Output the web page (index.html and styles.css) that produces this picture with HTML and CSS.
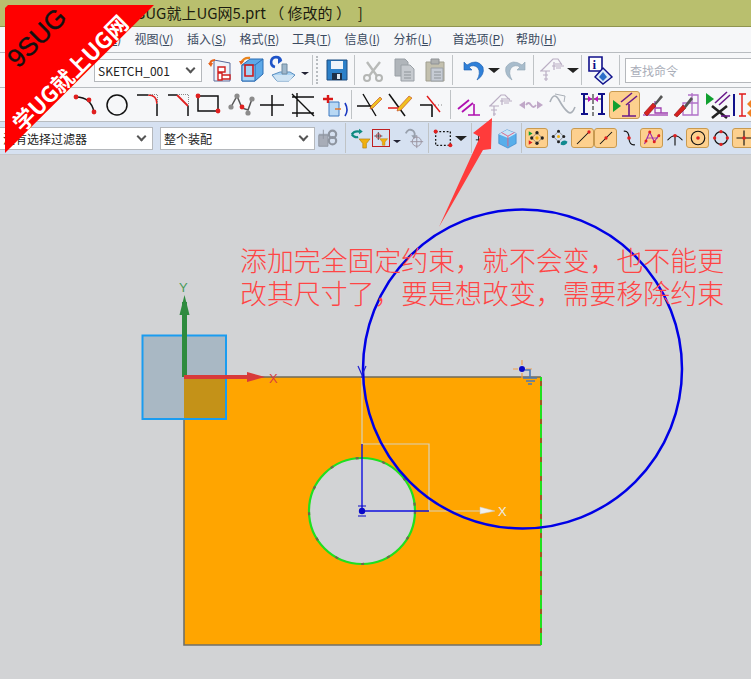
FILE: index.html
```html
<!DOCTYPE html>
<html lang="zh">
<head>
    <meta charset="UTF-8">
    <title>9SUG就上UG网5.prt</title>
    <link rel="stylesheet" href="styles.css">
</head>
<body>
    <div class="app">
        <div class="titlebar">9SUG就上UG网5.prt （ 修改的 ）  ]</div>

        <div class="menubar">
            <span>编辑(<u>E</u>)</span>
            <span>视图(<u>V</u>)</span>
            <span>插入(<u>S</u>)</span>
            <span>格式(<u>R</u>)</span>
            <span>工具(<u>T</u>)</span>
            <span>信息(<u>I</u>)</span>
            <span class="tight">分析(<u>L</u>)</span>
            <span class="wide">首选项(<u>P</u>)</span>
            <span>帮助(<u>H</u>)</span>
        </div>

        <div class="toolbar row-std">
            <div class="combo name-combo"><span>SKETCH_001</span><i class="chev"></i></div>
            <div class="tool"><svg viewBox="0 0 28 28"><path d="M7 4L23 7V25H7z" fill="#eef2fa" stroke="#5a6a9a"/><path d="M11 11h7v5h-7zM11 17h4v7h-4zM15 19h8v4h-8z" fill="#fff" stroke="#d02020" stroke-width="1.4"/><path d="M3 9Q3 4 8 4" fill="none" stroke="#e8641c" stroke-width="2.2"/><path d="M1 7h5l-2 4z" fill="#e8641c"/></svg></div>
            <div class="tool"><svg viewBox="0 0 28 28"><path d="M4 9L12 3H25V18L17 25H4z" fill="#5da9e8" stroke="#2a6cb4"/><path d="M4 9H17V25H4z" fill="#a6d2f6" stroke="#2a6cb4"/><path d="M17 9L25 3" stroke="#2a6cb4"/><path d="M7 9h8v11H7z" fill="none" stroke="#d01818" stroke-width="1.6"/><path d="M3 7Q6 1 12 2" fill="none" stroke="#e8841c" stroke-width="2.4"/><path d="M1 5h5l-3 4z" fill="#e8641c"/></svg></div>
            <div class="tool"><svg viewBox="0 0 28 28"><path d="M3 19L11 16H21L26 19 20 25H8z" fill="#a9d2f2" stroke="#5b8fc0"/><path d="M13 8h5v10h-5z" fill="#9fb8cc" stroke="#6f8aa0"/><path d="M4 19h21l-4 6H8z" fill="#d8e8f4" opacity=".8"/><path d="M12 5A5 5 0 1 0 6 11" fill="none" stroke="#1f54c8" stroke-width="2.6"/><path d="M9 1l4 4-4 3z" fill="#1f54c8"/></svg></div>
            <i class="drop small"></i>
            <i class="sep"></i><i class="grip"></i>
            <div class="tool"><svg viewBox="0 0 28 28"><path d="M4 4H24V24H4z" fill="#2c80c8" stroke="#1d4c80"/><path d="M8 5H20V13H8z" fill="#eef4fa"/><path d="M9 17H19V24H9z" fill="#1d3048"/><path d="M14 18h3v5h-3z" fill="#dfe8f0"/></svg></div>
            <i class="sep"></i>
            <div class="tool dim"><svg viewBox="0 0 28 28"><path d="M10 20L21 6M18 20L8 6" stroke="#b8bab8" stroke-width="2.4"/><circle cx="8" cy="22" r="3" fill="none" stroke="#b4b6b4" stroke-width="2"/><circle cx="20" cy="22" r="3" fill="none" stroke="#b4b6b4" stroke-width="2"/></svg></div>
            <div class="tool dim"><svg viewBox="0 0 28 28"><path d="M5 3H15L18 6V20H5z" fill="#b0b5ba" stroke="#9aa0a6"/><path d="M11 9H20L24 13V25H11z" fill="#c6cacf" stroke="#9aa0a6"/><path d="M14 16h7M14 19h7M14 22h7" stroke="#8e9499"/></svg></div>
            <div class="tool dim"><svg viewBox="0 0 28 28"><path d="M5 6H23V25H5z" fill="#c3c0ae" stroke="#a09e90"/><path d="M10 3H18V8H10z" fill="#aeb0b0" stroke="#8f9296"/><path d="M10 12H22V25H10z" fill="#c6cbd4" stroke="#9aa0a6"/><path d="M13 16h7M13 19h7M13 22h7" stroke="#8e9499"/></svg></div>
            <i class="sep roomy"></i>
            <div class="tool"><svg viewBox="0 0 28 28"><path d="M5 6V14H13L10 11Q15 8 19 12 22 17 18 24 26 19 24 11 18 2 8 9z" fill="#2f80d8" stroke="#1a5cb0" stroke-width=".6"/></svg></div>
            <i class="drop"></i>
            <div class="tool dim"><svg viewBox="0 0 28 28"><path d="M23 6V14H15L18 11Q13 8 9 12 6 17 10 24 2 19 4 11 10 2 20 9z" fill="#a8bccc" stroke="#90a4b4" stroke-width=".6"/></svg></div>
            <i class="sep"></i>
            <div class="tool dim"><svg viewBox="0 0 28 28"><path class="stair" d="M3 15L15 3H20L24 9M2 15H12M5 19H10M6 23H10M8 15V25M16 6V14M14 10H26M17 8H24M18 12H23"/></svg></div>
            <i class="drop"></i>
            <i class="sep"></i>
            <div class="tool info"><svg viewBox="0 0 28 28"><path d="M3 1H16V15H3z" fill="#fff" stroke="#10108a" stroke-width="1.6"/><text x="6.5" y="13" class="info-i">i</text><path d="M17 12L26 21 17 28 9 21z" fill="#dceaf8" stroke="#10108a" stroke-width="1.4"/><path d="M17 16L21 21 17 25 13 21z" fill="#2a6ec8"/></svg></div>
            <i class="sep"></i>
            <div class="search">查找命令</div>
        </div>

        <div class="toolbar row-sketch">
            <div class="tool"><svg viewBox="0 0 28 28"><circle cx="6" cy="6" r="2.4" fill="#e02020"/></svg></div>
            <div class="tool"><svg viewBox="0 0 28 28"><path d="M4 6Q19 6 22 21" fill="none" stroke="#111" stroke-width="1.5"/><circle cx="4" cy="6" r="2.4" fill="#e02020"/><circle cx="17" cy="9" r="2.4" fill="#e02020"/><circle cx="22" cy="21" r="2.4" fill="#e02020"/></svg></div>
            <div class="tool"><svg viewBox="0 0 28 28"><circle cx="14" cy="14" r="10" fill="none" stroke="#111" stroke-width="1.5"/></svg></div>
            <div class="tool"><svg viewBox="0 0 28 28"><path d="M3 4H14M23 13V25" fill="none" stroke="#111" stroke-width="1.5"/><path d="M14 4Q23 4 23 13" fill="none" stroke="#e02020" stroke-width="1.6"/><path d="M14 3.5H23.5V13" fill="none" stroke="#888" stroke-dasharray="1 1"/></svg></div>
            <div class="tool"><svg viewBox="0 0 28 28"><path d="M3 4H12M23 15V25" fill="none" stroke="#111" stroke-width="1.5"/><path d="M12 4L23 15" fill="none" stroke="#e02020" stroke-width="1.8"/><path d="M12 3.5H23.5V15" fill="none" stroke="#888" stroke-dasharray="1 1"/></svg></div>
            <div class="tool"><svg viewBox="0 0 28 28"><path d="M2 5H22V20H2z" fill="none" stroke="#111" stroke-width="1.5"/><circle cx="2" cy="5" r="2.4" fill="#e02020"/><circle cx="22" cy="20" r="2.4" fill="#e02020"/></svg></div>
            <div class="tool"><svg viewBox="0 0 28 28"><path d="M4 16L10 5 15 17 21 19 25 8" fill="none" stroke="#555" stroke-width="1.5"/><g fill="#8c8c8c"><circle cx="4" cy="16" r="2.6"/><circle cx="10" cy="5" r="2.6"/><circle cx="21" cy="22" r="2.6"/><circle cx="25" cy="8" r="2.6"/></g><circle cx="15" cy="16" r="2.4" fill="#e02020"/></svg></div>
            <div class="tool"><svg viewBox="0 0 28 28"><path d="M14 4V25M2 14H26" stroke="#111" stroke-width="1.5"/></svg></div>
            <div class="tool"><svg viewBox="0 0 28 28"><path d="M3 6H25M3 22H25M8 2V26M3 3L25 25" stroke="#111" stroke-width="1.4"/></svg></div>
            <div class="tool"><svg viewBox="0 0 28 28"><path d="M9 11H19V25H9z" fill="#b8d8f4" stroke="#3c78c0"/><path d="M8 4V12M3 8H13" stroke="#d81818" stroke-width="2.4"/><path d="M15 18h6" stroke="#e8701c" stroke-width="1.4"/><path d="M25 12Q29 19 25 25" fill="none" stroke="#1a38c0" stroke-width="1.6"/></svg></div>
            <i class="sep tall"></i>
            <div class="tool mid"><svg viewBox="0 0 28 28"><path d="M2 15H18M8 3L21 25" stroke="#111" stroke-width="1.4"/><path d="M16 15l9-9 2 2-9 9-3 1z" fill="#f0c020" stroke="#c04020" stroke-width=".6"/></svg></div>
            <div class="tool mid"><svg viewBox="0 0 28 28"><path d="M3 3L19 25" stroke="#111" stroke-width="1.5"/><path d="M2 17H13" stroke="#e01818" stroke-width="1.5"/><path d="M12 17L23 5l3 2-11 12-4 1z" fill="#f0c020" stroke="#c04020" stroke-width=".6"/></svg></div>
            <div class="tool mid"><svg viewBox="0 0 28 28"><path d="M2 14H14M14 14V26" stroke="#111" stroke-width="1.6"/><path d="M14 14H25" stroke="#888" stroke-dasharray="1 2"/><path d="M9 5L22 21" stroke="#e01818" stroke-width="1.4"/></svg></div>
            <i class="sep tall"></i>
            <div class="tool"><svg viewBox="0 0 28 28"><path d="M3 18L14 9M7 21L18 12" stroke="#b010b0" stroke-width="1.8"/><path d="M19 13V24M13 24H25" stroke="#b010b0" stroke-width="1.6"/></svg></div>
            <div class="tool"><svg viewBox="0 0 28 28"><path class="stair" d="M4 15L15 4H19L24 9M3 15H13M5 19H11M7 23H10M8 15V25M16 7V14M14 10H26M17 8H24M18 12H23"/></svg></div>
            <div class="tool"><svg viewBox="0 0 28 28"><path d="M2 14l6-4v8zM26 14l-6-4v8z" fill="#c0a8c8"/><path d="M9 14q2.5-4 5 0t5 0" fill="none" stroke="#c0a8c8" stroke-width="1.8"/></svg></div>
            <div class="tool"><svg viewBox="0 0 28 28"><path d="M2 11Q6 0 11 9T20 21 27 16" fill="none" stroke="#aab0b8" stroke-width="1.6"/><path d="M7 3L17 5 16 11" fill="none" stroke="#aab0b8"/></svg></div>
            <div class="tool"><svg viewBox="0 0 28 28"><path d="M2 3H9M5 3V23M2 23H9M19 3H26M23 3V23M19 23H26" stroke="#10108a" stroke-width="2" fill="none"/><path d="M14 3V26" stroke="#111" stroke-dasharray="4 2"/><path d="M6 8H22" stroke="#111"/><path d="M9 5l4 3-4 3zM19 5l-4 3 4 3z" fill="#c010c0"/></svg></div>
            <div class="tool on"><svg viewBox="0 0 28 28"><path d="M3 9l8 6-8 6z" fill="#10a030"/><path d="M11 11L22 2M16 14L27 5" stroke="#6a1a8a" stroke-width="1.6"/><path d="M19 13V25M12 25H26" stroke="#6a1a8a" stroke-width="1.6"/></svg></div>
            <div class="tool"><svg viewBox="0 0 28 28"><path d="M14 10V22H27M14 17H20V22" fill="none" stroke="#a040b0" stroke-width="1.3"/><path d="M2 24H27" stroke="#a040b0" stroke-width="1.3"/><path d="M3 22L12 12l3 3-9 10z" fill="#d82020" stroke="#801010" stroke-width=".6"/><path d="M13 13L20 4l2 2-7 8z" fill="#555"/></svg></div>
            <div class="tool"><svg viewBox="0 0 28 28"><path d="M11 12H26V24H11zM16 4H26V12M20 2V24" fill="none" stroke="#b070c8" stroke-width="1.3"/><path d="M2 24L11 14l3 3-9 9z" fill="#d82020" stroke="#801010" stroke-width=".6"/><path d="M12 15L19 6l2 2-7 9z" fill="#555"/></svg></div>
            <div class="tool"><svg viewBox="0 0 28 28"><path d="M3 2l8 6-8 6z" fill="#10a030"/><path d="M12 12L24 1M16 14L27 4" stroke="#6a1a8a" stroke-width="1.6"/><path d="M9 15L24 27M24 15L9 27" stroke="#222" stroke-width="2.6"/><path d="M18 25H27" stroke="#6a1a8a" stroke-width="1.6"/></svg></div>
            <div class="tool cut"><svg viewBox="0 0 28 28"><path d="M3 3V25" stroke="#10108a" stroke-width="2"/><path d="M8 3H15M11 3V25M8 25H15" stroke="#e01818" stroke-width="1.4"/><path d="M21 8l-5 5 5 5zM21 17l-5 5 5 5z" fill="#f08020"/></svg></div>
        </div>

        <div class="toolbar row-select">
            <div class="combo filter-combo"><span>没有选择过滤器</span><i class="chev"></i></div>
            <div class="combo scope-combo"><span>整个装配</span><i class="chev"></i></div>
            <div class="tool small-tool dim"><svg viewBox="0 0 24 24"><path d="M3 9H13V21H3z" fill="#a8adb8" stroke="#8e95a0"/><path d="M8 3V13M3 8H13" stroke="#8e95a0"/><ellipse cx="18" cy="8" rx="4" ry="4" fill="none" stroke="#8e95a0" stroke-width="2.4"/><ellipse cx="18" cy="15" rx="4" ry="4" fill="none" stroke="#8e95a0" stroke-width="2.4"/></svg></div>
            <i class="sep pushed"></i>
            <div class="tool small-tool"><svg viewBox="0 0 24 24"><path d="M3 8Q6 4 11 5M3 8q3 4 7 3" fill="none" stroke="#0f8a80" stroke-width="2.4"/><path d="M11 2l4 3-4 3z" fill="#0f8a80"/><path d="M11 13H23L19 18V23H15V18z" fill="#f0b010" stroke="#a87808" stroke-width=".6"/></svg></div>
            <div class="tool small-tool framed"><svg viewBox="0 0 24 24"><path d="M8 3V15M2 9H14" stroke="#111"/><circle cx="8" cy="9" r="3.4" fill="none" stroke="#c02020"/><path d="M10 13H22L18 18V23H14V18z" fill="#f0b010" stroke="#a87808" stroke-width=".6"/></svg></div>
            <i class="drop small"></i>
            <div class="tool small-tool dim"><svg viewBox="0 0 24 24"><path d="M3 7Q6 1 11 4 14 7 12 11" fill="none" stroke="#98a0ac" stroke-width="2"/><path d="M9 9h6l-3 4z" fill="#98a0ac"/><circle cx="15" cy="16" r="5" fill="none" stroke="#98909c"/><path d="M15 9V23M8 16H22" stroke="#98909c"/></svg></div>
            <i class="sep"></i>
            <div class="tool small-tool"><svg viewBox="0 0 24 24"><path d="M4 5H20V20H4z" fill="none" stroke="#111" stroke-width="1.4" stroke-dasharray="2 2"/><circle cx="4" cy="5" r="2.2" fill="#e02020"/><circle cx="20" cy="20" r="2.2" fill="#e02020"/></svg></div>
            <i class="drop spaced"></i>
            <i class="sep"></i>
            <div class="tool small-tool hidden-part"><svg viewBox="0 0 24 24"><path d="M5 21V5M2 14H16" stroke="#111"/></svg></div>
            <div class="tool small-tool"><svg viewBox="0 0 24 24"><path d="M3 8L12 3 22 7V18L13 23 3 18z" fill="#58aeea" stroke="#2a78c0" stroke-width=".6"/><path d="M3 8L13 12 22 7 12 3z" fill="#c8e4f8"/><path d="M6 6L13 10V21M13 10L20 6" fill="none" stroke="#e06080"/></svg></div>
            <i class="sep"></i>
            <div class="tool snap on first"><svg viewBox="0 0 24 24"><path d="M12 5l7 7-7 7-7-7z" fill="none" stroke="#777"/><g fill="#222"><circle cx="12" cy="5" r="2.2"/><circle cx="19" cy="12" r="2.2"/><circle cx="12" cy="19" r="2.2"/><circle cx="5" cy="12" r="2.2"/></g><circle cx="12" cy="12" r="2.2" fill="#f0b010"/><path d="M1 3l5 3-5 3z" fill="#10a030"/><path d="M1 15l5 3-5 3z" fill="#e02020"/></svg></div>
            <div class="tool snap"><svg viewBox="0 0 24 24"><path d="M10 3l7 7-7 7-7-7z" fill="none" stroke="#777"/><g fill="#222"><circle cx="10" cy="3" r="2"/><circle cx="17" cy="10" r="2"/><circle cx="10" cy="17" r="2"/><circle cx="3" cy="10" r="2"/></g><circle cx="10" cy="10" r="2" fill="#f0b010"/><path d="M13 18q4-5 9-1-2 6-9 4z" fill="#108a90"/></svg></div>
            <div class="tool snap on"><svg viewBox="0 0 24 24"><path d="M4 20L20 4" stroke="#111" stroke-width="1.4"/><circle cx="20" cy="4" r="2.2" fill="#e02020"/></svg></div>
            <div class="tool snap on"><svg viewBox="0 0 24 24"><path d="M4 20L20 4" stroke="#111" stroke-width="1.4"/><circle cx="12" cy="12" r="2.2" fill="#e02020"/></svg></div>
            <div class="tool snap"><svg viewBox="0 0 24 24"><path d="M5 3Q12 2 12 12T20 21" fill="none" stroke="#111" stroke-width="1.5"/><circle cx="12" cy="12" r="2.4" fill="#e02020"/></svg></div>
            <div class="tool snap on"><svg viewBox="0 0 24 24"><path d="M2 20L9 4 15 17 22 7" fill="none" stroke="#9a20b0" stroke-width="1.4"/><path d="M5 12L20 12" stroke="#9a20b0"/><g fill="#e02020"><circle cx="9" cy="4" r="2"/><circle cx="4" cy="16" r="2"/><circle cx="15" cy="17" r="2"/><circle cx="21" cy="9" r="2"/></g></svg></div>
            <div class="tool snap"><svg viewBox="0 0 24 24"><path d="M2 15Q12 3 22 15M12 9V22" fill="none" stroke="#111" stroke-width="1.5"/><circle cx="12" cy="9" r="2.4" fill="#e02020"/></svg></div>
            <div class="tool snap on"><svg viewBox="0 0 24 24"><circle cx="12" cy="12" r="9" fill="none" stroke="#111" stroke-width="1.5"/><circle cx="12" cy="12" r="2.4" fill="#e02020"/></svg></div>
            <div class="tool snap"><svg viewBox="0 0 24 24"><circle cx="12" cy="12" r="8.5" fill="none" stroke="#111" stroke-width="1.5"/><g fill="#e02020"><circle cx="12" cy="3.5" r="2.2"/><circle cx="20.500" cy="12" r="2.2"/><circle cx="12" cy="20.500" r="2.2"/><circle cx="3.500" cy="12" r="2.2"/></g></svg></div>
            <div class="tool snap on"><svg viewBox="0 0 24 24"><path d="M12 2V22M2 12H22" stroke="#111" stroke-width="1.5"/><circle cx="12" cy="12" r="2.4" fill="#e02020"/></svg></div>
        </div>

        <div class="viewport">
            <svg class="model" viewBox="0 155 751 524">
                <rect x="184" y="377" width="357" height="268" fill="#ffa500"/>
                <path d="M184 377V645H541" fill="none" stroke="#70706a" stroke-width="1.6"/>
                <path d="M184 377H541" stroke="#6e6a5a" stroke-width="1.6"/>
                <path d="M541 377V645" stroke="#1fe01f" stroke-width="2"/>
                <path d="M541 381V645" stroke="#a05a20" stroke-width="2" stroke-dasharray="5 14"/>

                <rect x="142.500" y="335.500" width="41.500" height="83" fill="#a9b8c4"/>
                <rect x="184" y="335.500" width="41.500" height="41.500" fill="#a9b8c4"/>
                <rect x="184" y="377" width="41.500" height="41.500" fill="#c49218"/>
                <rect x="142.500" y="335.500" width="83.500" height="83.500" fill="none" stroke="#1a9cf0" stroke-width="2"/>

                <circle cx="362" cy="511" r="53" fill="#d2d3d5" stroke="#1fe01f" stroke-width="2.2"/>
                <circle cx="362" cy="511" r="53" fill="none" stroke="#6a6a50" stroke-width="2.2" stroke-dasharray="3 24"/>

                <path d="M362 378V444M362 444H429V511H480" fill="none" stroke="#d8d2bc" stroke-width="1.2"/>
                <path d="M362 444V511H429" fill="none" stroke="#1010e0" stroke-width="1.4"/>
                <path d="M480 507L495 511 480 514z" fill="#f0f0ee" stroke="#c8c8c4" stroke-width=".5"/>
                <text x="498" y="516" class="axis white">X</text>
                <circle cx="362" cy="511" r="3.2" fill="#0808c8"/>
                <path d="M358 506H366M358 516H366" stroke="#0808c8" stroke-width="1.2"/>

                <circle cx="522.500" cy="369" r="159.500" fill="none" stroke="#0000e6" stroke-width="2.5"/>
                <path d="M358 366L362 375 366 366M362 375V378" fill="none" stroke="#2020d0" stroke-width="1.2"/>

                <path d="M522 360V365M522 373V378M513 369H518M526 369H532" stroke="#f0a050" stroke-width="1.2"/>
                <circle cx="522" cy="369" r="3" fill="#0808c8"/>
                <path d="M525 370H530V378M523 378H537M526 381H535M528 384H532" fill="none" stroke="#4a78b8" stroke-width="1.6"/>

                <rect x="182" y="302" width="5" height="75" fill="#2e8b3e"/>
                <path d="M184.500 295L189.500 315H179.500z" fill="#2e8b3e"/>
                <text x="179" y="292" class="axis green">Y</text>
                <rect x="184" y="375" width="64" height="4" fill="#d83a3a"/>
                <path d="M247 372L265 377 247 382z" fill="#d83a3a"/>
                <text x="269" y="383" class="axis red">X</text>
            </svg>
            <div class="note">添加完全固定约束，就不会变，也不能更<br>改其尺寸了，要是想改变，需要移除约束</div>
        </div>
    </div>

    <svg class="pointer" viewBox="0 0 751 679">
        <path d="M492 118L473 133 480 137 439 227 483 150 491 149z" fill="#ff3b3b"/>
    </svg>

    <div class="ribbon">
        <svg viewBox="0 0 160 160"><path d="M8 5H154L5 153V8z" fill="#ff0000"/></svg>
        <span class="ribbon-top">9SUG</span>
        <span class="ribbon-main">学UG就上UG网</span>
    </div>
</body>
</html>
```

FILE: styles.css
```css
html, body {
    margin: 0;
    padding: 0;
    height: 100%;
    overflow: hidden;
}

body {
    font-family: "Noto Sans CJK SC", "Noto Sans", sans-serif;
    font-size: 12px;
    color: #222;
}

.app {
    height: 679px;
    display: flex;
    flex-direction: column;
}

.titlebar {
    height: 26px;
    line-height: 26px;
    padding-left: 128px;
    background: #b9bf6e;
    border-bottom: 1px solid #8f9450;
    font-size: 15px;
    color: #1c1c10;
    white-space: pre;
}

.menubar {
    height: 26px;
    display: flex;
    align-items: center;
    gap: 13.5px;
    padding: 0 0 2px 82px;
    background: #f6f7f9;
    border-bottom: 1px solid #b8bcc0;
    color: #3a4a60;
    box-sizing: border-box;
    white-space: nowrap;
}

.menubar span {
    width: 39px;
}

.menubar .tight {
    margin-left: -3.5px;
}

.menubar .wide {
    width: 50px;
    margin-left: 6.5px;
}

.toolbar {
    display: flex;
    align-items: center;
    box-sizing: border-box;
    white-space: nowrap;
}

.row-std {
    height: 35px;
    padding-left: 94px;
    background: #f6f7f9;
    border-bottom: 1px solid #b8bcc0;
}

.row-sketch {
    height: 34px;
    padding-left: 39px;
    background: #f6f7f9;
    border-bottom: 1px solid #b8bcc0;
}

.row-select {
    height: 33px;
    background: #d6e1f1;
    border-bottom: 1px solid #c6c9cc;
}

.tool {
    flex: none;
    width: 31px;
    height: 28px;
    display: flex;
    align-items: center;
    justify-content: center;
    box-sizing: border-box;
}

.tool svg {
    width: 28px;
    height: 28px;
    overflow: visible;
}

.tool.mid {
    width: 31.5px;
}

.tool.info {
    margin-right: 2px;
}

.tool.on {
    background: #fdd08e;
    border: 1px solid #c89a50;
    border-radius: 3px;
}

.tool.cut {
    margin-left: -3px;
}

.small-tool {
    width: 24px;
    height: 24px;
}

.small-tool svg {
    width: 22px;
    height: 22px;
}

.small-tool.framed {
    width: 18px;
}

.small-tool.framed svg {
    width: 16px;
    height: 16px;
    border: 1px solid #c02020;
}

.small-tool.hidden-part {
    width: 21px;
}

.snap {
    width: 23px;
    height: 20px;
}

.snap svg {
    width: 18px;
    height: 18px;
}

.snap.first {
    margin-left: 1px;
}

.stair {
    fill: none;
    stroke: #baaec4;
    stroke-width: 1.2;
}

.info-i {
    font: bold 13px "Liberation Serif", serif;
    fill: #10108a;
}

.combo {
    flex: none;
    box-sizing: border-box;
    height: 23px;
    display: flex;
    align-items: center;
    justify-content: space-between;
    padding: 0 7px 0 3px;
    background: #fff;
    border: 1px solid #b5b8bc;
    font-size: 12px;
    color: #222;
}

.name-combo {
    width: 108px;
    margin-right: 3px;
}

.filter-combo {
    width: 153px;
    margin-right: 7px;
    border-left: none;
}

.scope-combo {
    width: 155px;
}

.chev {
    width: 5px;
    height: 5px;
    margin-top: -3px;
    border-right: 2px solid #555;
    border-bottom: 2px solid #555;
    transform: rotate(45deg);
}

.drop {
    flex: none;
    width: 12px;
    height: 0;
    box-sizing: border-box;
    border-top: 5px solid #222;
    border-left: 6px solid transparent;
    border-right: 6px solid transparent;
}

.drop.spaced {
    margin-right: 2px;
}

.drop.small {
    width: 8px;
    margin: 6px 1px 0 3px;
    border-top: 3px solid #223;
    border-left: 4px solid transparent;
    border-right: 4px solid transparent;
}

.sep {
    flex: none;
    width: 1px;
    height: 30px;
    margin: 0 2px;
    background: #bfc3c6;
}

.sep.roomy {
    margin-right: 4px;
}

.sep.pushed {
    margin-left: 6px;
}

.sep.tall {
    height: 29px;
    margin: 0 1px 0 2px;
}

.tool.mid + .sep.tall {
    margin-right: 3px;
}

.grip {
    flex: none;
    width: 2px;
    height: 28px;
    margin: 0 1px;
    border-left: 2px dotted #b8bcc0;
}

.search {
    flex: none;
    width: 140px;
    height: 25px;
    line-height: 23px;
    margin-left: 3px;
    padding-left: 4px;
    box-sizing: border-box;
    background: #fff;
    border: 1px solid #b5b8bc;
    color: #a9adb8;
}

.viewport {
    flex: 1;
    position: relative;
    background: #d2d3d5;
}

.model {
    display: block;
    width: 751px;
    height: 524px;
}

.axis {
    font: 13px "Liberation Sans", sans-serif;
}

.axis.white {
    fill: #ecece6;
}

.axis.green {
    fill: #4a9a5a;
}

.axis.red {
    fill: #d84040;
}

.note {
    position: absolute;
    left: 240px;
    top: 88px;
    font-size: 26.9px;
    font-weight: 300;
    line-height: 33px;
    color: #ff4545;
    white-space: nowrap;
}

.pointer {
    position: absolute;
    left: 0;
    top: 0;
    width: 751px;
    height: 679px;
    pointer-events: none;
}

.ribbon {
    position: absolute;
    left: 0;
    top: 0;
    width: 160px;
    height: 160px;
}

.ribbon svg {
    display: block;
    width: 160px;
    height: 160px;
}

.ribbon span {
    position: absolute;
    white-space: nowrap;
    transform: translate(-50%, -50%) rotate(-45deg);
}

.ribbon-top {
    left: 37px;
    top: 38px;
    font: 26px "Liberation Sans", sans-serif;
    -webkit-text-stroke: .4px #111;
    color: #111;
}

.ribbon-main {
    left: 69px;
    top: 72px;
    font-size: 22px;
    font-weight: 700;
    color: #fff;
}
```
